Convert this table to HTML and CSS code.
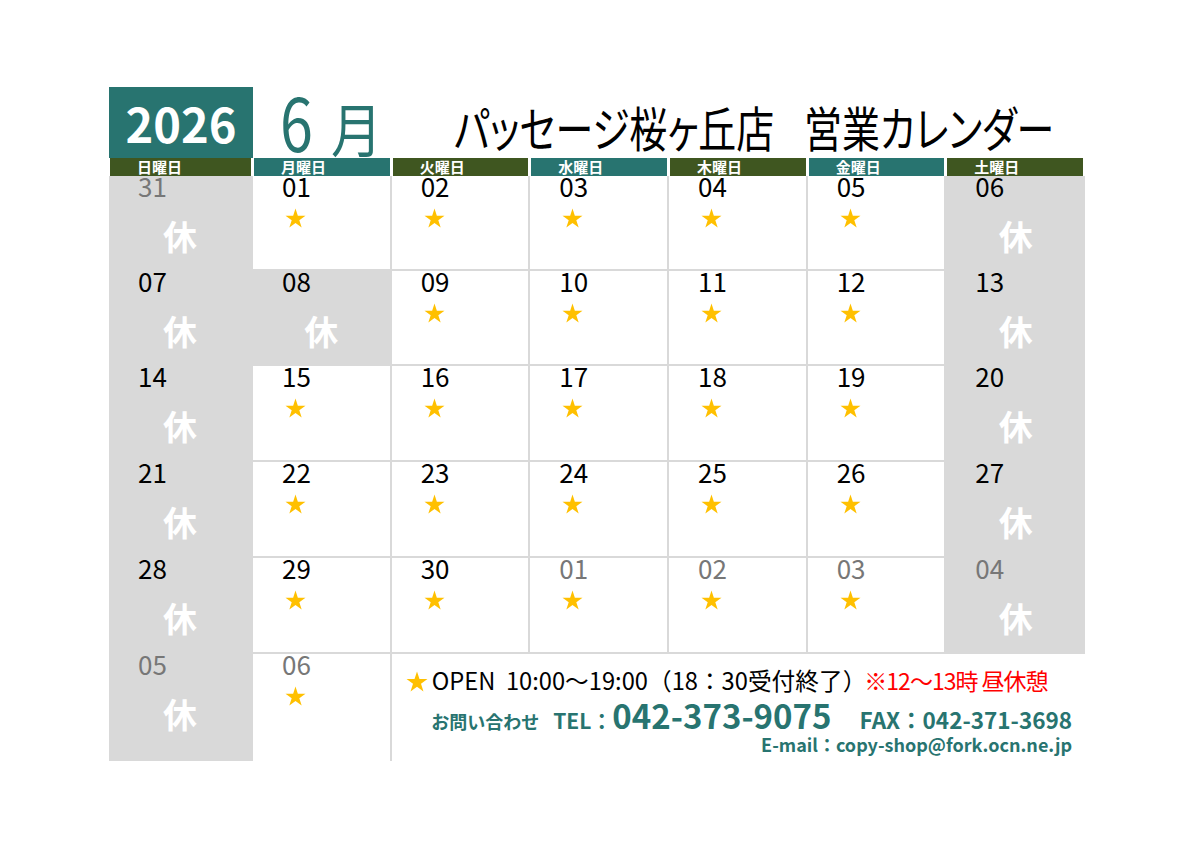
FILE: index.html
```html
<!DOCTYPE html>
<html lang="ja">
<head>
<meta charset="utf-8">
<title>パッセージ桜ヶ丘店 営業カレンダー 2026年6月</title>
<link rel="stylesheet" href="styles.css">
</head>
<body>
<svg class="defs" width="0" height="0" aria-hidden="true">
  <defs>
    <symbol id="star" viewBox="0 0 100 91">
      <polygon points="50,0 61.23,34.55 97.55,34.55 68.16,55.9 79.39,90.45 50,69.1 20.61,90.45 31.84,55.9 2.45,34.55 38.77,34.55"/>
    </symbol>
  </defs>
</svg>
<div class="sheet">
  <div class="top">
    <div class="year">2026</div>
    <div class="month"><span class="m-num">6</span><span class="m-kanji">月</span></div>
    <div class="title"><span>パッセージ桜ヶ丘店</span><span class="t2">営業カレンダー</span></div>
  </div>
  <div class="cal">
    <div class="dow olive">日曜日</div>
    <div class="dow teal">月曜日</div>
    <div class="dow olive">火曜日</div>
    <div class="dow teal">水曜日</div>
    <div class="dow olive">木曜日</div>
    <div class="dow teal">金曜日</div>
    <div class="dow olive">土曜日</div>

    <div class="cell off out"><div class="num">31</div><div class="kyu">休</div></div>
    <div class="cell"><div class="num">01</div><svg class="star"><use href="#star"/></svg></div>
    <div class="cell"><div class="num">02</div><svg class="star"><use href="#star"/></svg></div>
    <div class="cell"><div class="num">03</div><svg class="star"><use href="#star"/></svg></div>
    <div class="cell"><div class="num">04</div><svg class="star"><use href="#star"/></svg></div>
    <div class="cell"><div class="num">05</div><svg class="star"><use href="#star"/></svg></div>
    <div class="cell off sat"><div class="num">06</div><div class="kyu">休</div></div>

    <div class="cell off"><div class="num">07</div><div class="kyu">休</div></div>
    <div class="cell off"><div class="num">08</div><div class="kyu">休</div></div>
    <div class="cell"><div class="num">09</div><svg class="star"><use href="#star"/></svg></div>
    <div class="cell"><div class="num">10</div><svg class="star"><use href="#star"/></svg></div>
    <div class="cell"><div class="num">11</div><svg class="star"><use href="#star"/></svg></div>
    <div class="cell"><div class="num">12</div><svg class="star"><use href="#star"/></svg></div>
    <div class="cell off sat"><div class="num">13</div><div class="kyu">休</div></div>

    <div class="cell off"><div class="num">14</div><div class="kyu">休</div></div>
    <div class="cell"><div class="num">15</div><svg class="star"><use href="#star"/></svg></div>
    <div class="cell"><div class="num">16</div><svg class="star"><use href="#star"/></svg></div>
    <div class="cell"><div class="num">17</div><svg class="star"><use href="#star"/></svg></div>
    <div class="cell"><div class="num">18</div><svg class="star"><use href="#star"/></svg></div>
    <div class="cell"><div class="num">19</div><svg class="star"><use href="#star"/></svg></div>
    <div class="cell off sat"><div class="num">20</div><div class="kyu">休</div></div>

    <div class="cell off"><div class="num">21</div><div class="kyu">休</div></div>
    <div class="cell"><div class="num">22</div><svg class="star"><use href="#star"/></svg></div>
    <div class="cell"><div class="num">23</div><svg class="star"><use href="#star"/></svg></div>
    <div class="cell"><div class="num">24</div><svg class="star"><use href="#star"/></svg></div>
    <div class="cell"><div class="num">25</div><svg class="star"><use href="#star"/></svg></div>
    <div class="cell"><div class="num">26</div><svg class="star"><use href="#star"/></svg></div>
    <div class="cell off sat"><div class="num">27</div><div class="kyu">休</div></div>

    <div class="cell off"><div class="num">28</div><div class="kyu">休</div></div>
    <div class="cell"><div class="num">29</div><svg class="star"><use href="#star"/></svg></div>
    <div class="cell"><div class="num">30</div><svg class="star"><use href="#star"/></svg></div>
    <div class="cell out"><div class="num">01</div><svg class="star"><use href="#star"/></svg></div>
    <div class="cell out"><div class="num">02</div><svg class="star"><use href="#star"/></svg></div>
    <div class="cell out"><div class="num">03</div><svg class="star"><use href="#star"/></svg></div>
    <div class="cell off out sat"><div class="num">04</div><div class="kyu">休</div></div>

    <div class="cell off out last"><div class="num">05</div><div class="kyu">休</div></div>
    <div class="cell out last"><div class="num">06</div><svg class="star"><use href="#star"/></svg></div>
    <div class="cell info last sat">
      <div class="l1"><svg class="star s-inline"><use href="#star"/></svg>OPEN&nbsp;&nbsp;10:00～19:00（18：30受付終了）<span class="red">※12～13時 昼休憩</span></div>
      <div class="l2"><span class="ask">お問い合わせ</span><span class="tel">TEL：</span><span class="big">042-373-9075</span><span class="fax">FAX：042-371-3698</span></div>
      <div class="l3">E-mail：copy-shop@fork.ocn.ne.jp</div>
    </div>
  </div>
</div>
</body>
</html>
```

FILE: styles.css
```css
* { box-sizing: border-box; }
html, body { margin: 0; padding: 0; background: #fff; }
body {
  font-family: "Noto Sans CJK JP", "Noto Sans", sans-serif;
  color: #000;
}
.defs { position: absolute; width: 0; height: 0; overflow: hidden; }

.sheet { width: 976px; margin: 87px 0 0 109px; }

/* ---------- top row ---------- */
.top { display: flex; height: 71px; }
.top > div { flex-shrink: 0; }
.year {
  width: 144px;
  background: #287470;
  color: #fff;
  font-weight: 700;
  font-size: 47px;
  line-height: 48px;
  text-align: center;
  padding-top: 12px;
}
.month {
  color: #287470;
  line-height: 60px;
  padding-top: 3px;
  margin-left: 27px;
  white-space: nowrap;
}
.m-num {
  display: inline-block;
  font-size: 74px;
  transform: scaleX(0.8);
  transform-origin: left center;
}
.m-kanji {
  display: inline-block;
  font-size: 58px;
  margin-left: 10px;
  transform: scaleX(0.88);
  transform-origin: left center;
}
.title {
  font-size: 48px;
  line-height: 48px;
  padding-top: 15px;
  margin-left: 65px;
  white-space: nowrap;
  font-feature-settings: "palt";
  transform: scaleX(0.79);
  transform-origin: left top;
}
.t2 { margin-left: 38px; }

/* ---------- calendar grid ---------- */
.cal {
  display: grid;
  grid-template-columns: 144px repeat(6, 1fr);
  grid-template-rows: 18px 95px 95px 96px 96px 96px 107px;
}
.dow {
  margin: 0 2px 0 1px;
  color: #fff;
  font-weight: 700;
  font-size: 15px;
  line-height: 18px;
  padding-left: 27px;
}
.olive { background: #3f5620; }
.teal { background: #287470; }

.cell {
  border-right: 2px solid #d9d9d9;
  border-bottom: 2px solid #d9d9d9;
  background: #fff;
}
.cell.sat { border-right: none; }
.cell.last { border-bottom: none; }
.cell.off { background: #d9d9d9; }

.num {
  padding-left: 29px;
  font-size: 26px;
  line-height: 18px;
  height: 18px;
  margin-top: 1px;
}
.out .num { color: #777; }

.star {
  display: block;
  width: 21px;
  height: 20px;
  fill: #ffc000;
  margin: 13px 0 0 32px;
}
.kyu {
  text-align: center;
  color: #fff;
  font-weight: 700;
  font-size: 34px;
  line-height: 34px;
  margin-top: 24px;
}

/* ---------- info block ---------- */
.info { grid-column: span 5; }
.l1 {
  margin-top: 12px;
  height: 28px;
  padding-left: 14px;
  font-size: 23.7px;
  line-height: 28px;
  white-space: nowrap;
}
.star.s-inline {
  display: inline-block;
  width: 22px;
  height: 21px;
  margin: 0 4px 0 0;
  vertical-align: -2px;
}
.red {
  color: #f00;
  margin-left: -2px;
  font-size: 23px;
  letter-spacing: -1px;
}
.l2 {
  margin-top: 4px;
  height: 34px;
  padding-right: 13px;
  text-align: right;
  color: #287470;
  font-weight: 700;
  font-size: 33px;
  line-height: 34px;
  white-space: nowrap;
}
.l2 span { line-height: 18px; }
.ask { font-size: 18px; margin-right: 14px; }
.tel { font-size: 21px; }
.l2 .big { font-size: 33px; line-height: 34px; margin-right: 28px; }
.fax { font-size: 22.5px; }
.l3 {
  margin-top: 2px;
  height: 20px;
  padding-right: 13px;
  text-align: right;
  color: #287470;
  font-weight: 700;
  font-size: 18px;
  line-height: 20px;
  white-space: nowrap;
}
```
